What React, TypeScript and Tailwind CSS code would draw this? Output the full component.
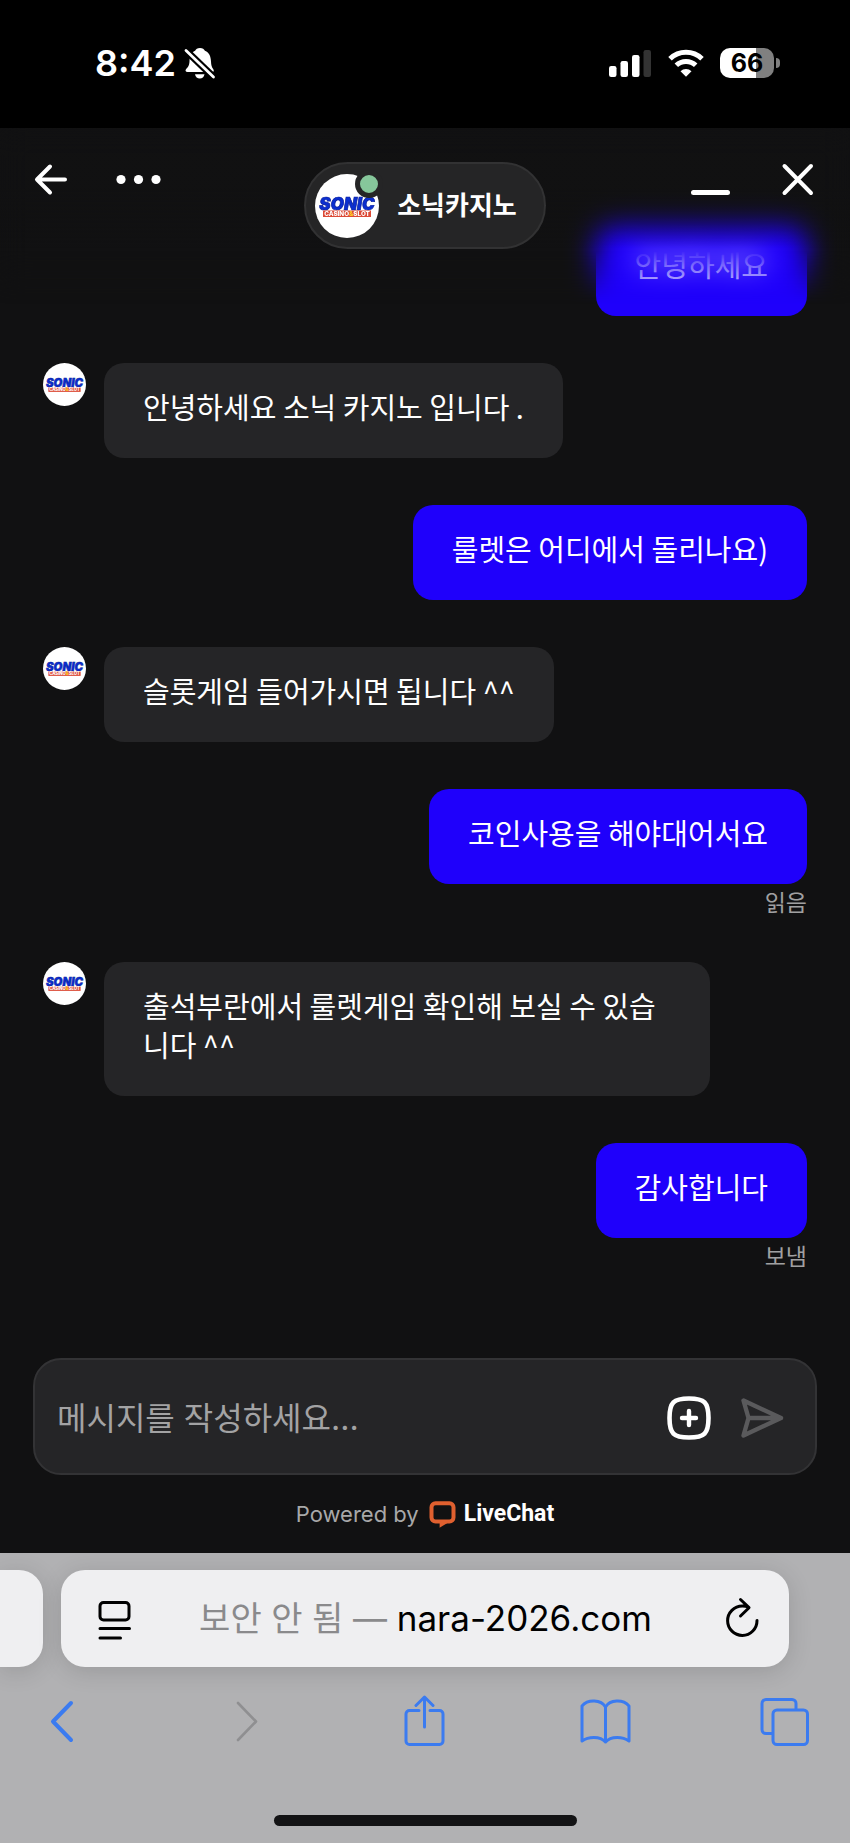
import React from "react";

type Message = {
  from: "agent" | "me";
  text: string;
  status?: string;
};

const MESSAGES: Message[] = [
  { from: "me", text: "안녕하세요" },
  { from: "agent", text: "안녕하세요 소닉 카지노 입니다 ." },
  { from: "me", text: "룰렛은 어디에서 돌리나요)" },
  { from: "agent", text: "슬롯게임 들어가시면 됩니다 ^^" },
  { from: "me", text: "코인사용을 해야대어서요", status: "읽음" },
  { from: "agent", text: "출석부란에서 룰렛게임 확인해 보실 수 있습니다 ^^" },
  { from: "me", text: "감사합니다", status: "보냄" },
];

export default function App() {
  return (
    <div className="flex min-h-screen flex-col bg-[#111112] font-['Inter','Noto_Sans_CJK_KR',sans-serif] text-white">
      <StatusBar />
      <main className="relative flex flex-1 flex-col">
        <ChatHeader />
        <ol className="flex flex-1 flex-col gap-[47px] px-[43px] pt-[93px] font-['Noto_Sans_CJK_KR',sans-serif]">
          {MESSAGES.map((m, i) => (
            <MessageRow key={i} message={m} />
          ))}
        </ol>
        <Composer />
        <PoweredBy />
      </main>
      <BrowserBar />
    </div>
  );
}

function StatusBar() {
  return (
    <div className="flex h-32 items-center justify-between bg-black pt-0 pr-[70px] pb-0.5 pl-[95px]">
      <div className="flex items-center gap-2">
        <span className="text-[36px] leading-10 font-semibold">8:42</span>
        <svg width="32" height="32" viewBox="0 0 32 32" fill="none">
          <path d="M16 1c2.600 0 4.200 1.200 4.900 2.800C25.500 5.600 26.800 10 27 14.500c.1 4 .8 5.500 2.300 7.700.8 1.200.8 2.800-1 2.800H3.500C1.500 25 1 23.400 2 22.200c2.400-2.500 3.300-4 3.500-8 .2-4.500 1.500-8.500 5.600-10.400C11.800 2.200 13.400 1 16 1Z" fill="white" />
          <path d="M11 27.200h9.500c-.4 2.700-2.300 4.300-4.700 4.300s-4.400-1.600-4.800-4.300Z" fill="white" />
          <path d="M2 3.500 30 30.500" stroke="black" strokeWidth="7" />
          <path d="M2 3.500 29.500 30" stroke="white" strokeWidth="2.800" strokeLinecap="round" />
        </svg>
      </div>
      <div className="flex items-center gap-4">
        <svg width="43" height="30" viewBox="0 0 43 30">
          <rect x="0" y="18" width="7.500" height="11" rx="2.200" fill="white" />
          <rect x="11.500" y="13" width="7.500" height="16" rx="2.200" fill="white" />
          <rect x="23" y="7" width="7.500" height="22" rx="2.200" fill="white" />
          <rect x="34.500" y="2" width="7.500" height="27" rx="2.200" fill="#333333" />
        </svg>
        <svg width="36" height="30" viewBox="0 0 36 30" fill="none" stroke="white" strokeWidth="5">
          <path d="M2 10.800a23 23 0 0 1 32 0" />
          <path d="M8.300 17.300a14 14 0 0 1 19.400 0" />
          <path d="M12.500 23.200a8 8 0 0 1 11 0L18 28.800Z" fill="white" stroke="none" />
        </svg>
        <div className="flex items-center gap-0.5">
          <div className="flex h-[30px] w-[54px] items-center justify-center rounded-[10px] bg-linear-to-r from-white from-67% to-[#808080] to-67%">
            <span className="text-[25px] leading-7 font-bold text-black">66</span>
          </div>
          <div className="h-2.5 w-1 rounded-r-full bg-[#808080]" />
        </div>
      </div>
    </div>
  );
}

function ChatHeader() {
  return (
    <header className="absolute inset-x-0 top-0 z-10">
      <div className="pointer-events-none absolute inset-x-0 top-0 h-[176px] mask-b-from-70% backdrop-blur-[14px]" />
      <div className="pointer-events-none absolute inset-x-0 top-0 h-[120px] bg-linear-to-b from-[#111112] from-50% to-transparent opacity-70" />
      <div className="relative grid grid-cols-[1fr_auto_1fr] items-start px-[34px] pt-[34px]">
        <div className="flex items-center gap-12">
          <button type="button" aria-label="뒤로">
            <svg width="34" height="34" viewBox="0 0 34 34" fill="none" stroke="white" strokeWidth="4" strokeLinecap="round" strokeLinejoin="round">
              <path d="M31 17.500H3.500M16 4.500l-13 13 13 13" />
            </svg>
          </button>
          <button type="button" aria-label="메뉴">
            <svg width="45" height="34" viewBox="0 0 45 34" fill="white">
              <circle cx="5" cy="17.500" r="4.600" />
              <circle cx="22.500" cy="17.500" r="4.600" />
              <circle cx="40" cy="17.500" r="4.600" />
            </svg>
          </button>
        </div>
        <div className="flex h-[87px] items-center gap-[18px] rounded-full border-2 border-[#323233] bg-[#252526] pr-[27px] pl-[9px]">
          <div className="relative">
            <Logo size={64} />
            <span className="absolute -top-1 -right-1 size-[28px] rounded-full border-[5px] border-[#252526] bg-[#86c79b]" />
          </div>
          <h1 className="text-[26px] leading-9 font-bold">소닉카지노</h1>
        </div>
        <div className="flex items-center justify-end gap-[50px]">
          <button type="button" aria-label="최소화">
            <svg width="40" height="34" viewBox="0 0 40 34">
              <rect x="1" y="28" width="39" height="5" rx="2.500" fill="white" />
            </svg>
          </button>
          <button type="button" aria-label="닫기">
            <svg width="36" height="34" viewBox="0 0 36 34" fill="none" stroke="white" strokeWidth="4" strokeLinecap="round">
              <path d="m4.500 4 26.500 27M31 4 4.500 31" />
            </svg>
          </button>
        </div>
      </div>
    </header>
  );
}

function Logo({ size }: { size: number }) {
  return (
    <svg width={size} height={size} viewBox="0 0 64 64" className="shrink-0">
      <circle cx="32" cy="32" r="32" fill="white" />
      <text x="32" y="35.500" textAnchor="middle" fontFamily="Inter" fontSize="17" fontWeight="900" fontStyle="italic" fill="#0b2fd0" stroke="#0a1e9a" strokeWidth="0.700">
        SONIC
      </text>
      <rect x="8" y="36.500" width="48" height="6.500" fill="#dc4a36" />
      <text x="32" y="42" textAnchor="middle" fontFamily="Inter" fontSize="6.300" fontWeight="800" fill="white">
        CASINO<tspan fill="#ffc928">&amp;</tspan>SLOT
      </text>
    </svg>
  );
}

function MessageRow({ message }: { message: Message }) {
  if (message.from === "agent") {
    return (
      <li className="flex items-start gap-[18px] pr-[97px]">
        <Logo size={43} />
        <p className="rounded-[20px] bg-[#252527] px-[39px] pt-6 pb-8 text-[29px] leading-[39px]">{message.text}</p>
      </li>
    );
  }
  return (
    <li className="flex flex-col items-end">
      <p className="rounded-[20px] bg-[#1f00fb] px-[39px] pt-6 pb-8 text-[29px] leading-[39px]">{message.text}</p>
      {message.status && <span className="pt-1 text-[23px] leading-[27px] text-[#a0a0a1]">{message.status}</span>}
    </li>
  );
}

function Composer() {
  return (
    <form className="mx-[33px] flex h-[117px] items-center gap-[26px] rounded-[28px] border-2 border-[#333335] bg-[#252527] pt-[3px] pr-[31px] pl-[22px]">
      <input
        type="text"
        aria-label="메시지"
        placeholder="메시지를 작성하세요..."
        className="h-14 min-w-0 flex-1 bg-transparent text-[32px] outline-none placeholder:text-[#a3a3a4]"
      />
      <button type="button" aria-label="첨부">
        <svg width="46" height="46" viewBox="0 0 46 46" fill="none" stroke="white" strokeLinecap="round">
          <path d="M23 3.500c15.500 0 19.500 4 19.500 19.500S38.500 42.500 23 42.500 3.500 38.500 3.500 23 7.500 3.500 23 3.500Z" strokeWidth="4.600" />
          <path d="M23 16v14M16 23h14" strokeWidth="4.400" />
        </svg>
      </button>
      <button type="submit" aria-label="보내기">
        <svg width="46" height="46" viewBox="0 0 46 46" fill="none" stroke="#5a5a5c" strokeWidth="4.400" strokeLinecap="round" strokeLinejoin="round">
          <path d="M5.500 5.500 43 23 5.500 40.500 10.500 23Z M10.500 23H43" />
        </svg>
      </button>
    </form>
  );
}

function PoweredBy() {
  return (
    <div className="flex h-[78px] items-center justify-center gap-2.5 text-[22px] leading-7">
      <span className="text-[#a8a8a9]">Powered by</span>
      <a href="#livechat" className="flex items-center gap-2">
        <svg width="27" height="27" viewBox="0 0 27 27" fill="none">
          <path d="M6.500 2.300h14a4 4 0 0 1 4 4v10.200a4 4 0 0 1-4 4h-14a4 4 0 0 1-4-4V6.300a4 4 0 0 1 4-4Z" stroke="#e0602f" strokeWidth="4" />
          <path d="M10.600 19v7.800l7.400-4.600V19Z" fill="#e0602f" />
        </svg>
        <span className="font-['Roboto'] text-[23px] font-bold">LiveChat</span>
      </a>
    </div>
  );
}

const TOOLS = [
  { label: "이전 페이지", color: "text-[#3b7bf0]", d: "M33 8 15 26.500 33 45", strokeWidth: 4 },
  { label: "다음 페이지", color: "text-[#8f8f91]", d: "M19 8 37 26.500 19 45", strokeWidth: 2.6 },
  { label: "공유", color: "text-[#3b7bf0]", d: "M20 15.500H10.500a3.500 3.500 0 0 0-3.500 3.500V46a3.500 3.500 0 0 0 3.500 3.500h30A3.500 3.500 0 0 0 44 46V19a3.500 3.500 0 0 0-3.500-3.500H31M25.500 32V2M17 10.500 25.500 2 34 10.500", strokeWidth: 3 },
  { label: "책갈피", color: "text-[#3b7bf0]", d: "M25.500 12C21 4.500 8 4 2 11V46c6-4.500 18-5.500 23.500 1C31 40.500 43 41.500 49 46V11C43 4 30 4.500 25.500 12ZM25.500 12V47", strokeWidth: 3 },
  { label: "탭", color: "text-[#3b7bf0]", d: "M12.500 38.500H6a4 4 0 0 1-4-4V8.500A4 4 0 0 1 6 4.500H32a4 4 0 0 1 4 4V14.500M17 15H43.500a4 4 0 0 1 4 4V45.500a4 4 0 0 1-4 4H17a4 4 0 0 1-4-4V19a4 4 0 0 1 4-4Z", strokeWidth: 3 },
];

function BrowserBar() {
  return (
    <footer className="overflow-hidden bg-[#b1b1b3] pt-[17px] pb-[17px]">
      <div className="flex h-[97px] gap-[18px] pr-[61px]">
        <div className="w-[43px] rounded-r-[24px] bg-[#efeff1] shadow-[0_4px_24px_rgba(0,0,0,0.14)]" />
        <div className="flex flex-1 items-center rounded-[24px] bg-[#efeff1] pr-[25px] pl-8 text-black shadow-[0_4px_24px_rgba(0,0,0,0.14)]">
          <button type="button" aria-label="읽기 도구">
            <svg width="44" height="44" viewBox="0 0 44 44" fill="none" stroke="black" strokeWidth="3" strokeLinecap="round">
              <rect x="7" y="5.500" width="29" height="17.500" rx="3.500" />
              <path d="M7 31.500h29.500M7 41h20.500" />
            </svg>
          </button>
          <p className="flex-1 pr-1.5 text-center text-[35px] leading-[44px] whitespace-nowrap">
            <span className="text-[34px] text-[#8a8a8c]">보안 안 됨 —</span> nara-2026.com
          </p>
          <button type="button" aria-label="새로고침">
            <svg width="44" height="44" viewBox="0 0 44 44" fill="none" stroke="black" strokeWidth="3" strokeLinecap="round" strokeLinejoin="round">
              <path d="M37 23.500A14.700 14.700 0 1 1 22.300 9c2.500 0 4.500.4 6.500 1.300M20.500 2.500 29 10.700 20.500 19" />
            </svg>
          </button>
        </div>
      </div>
      <nav className="mt-7 flex justify-between pr-[39px] pl-[38px]">
        {TOOLS.map((t) => (
          <button key={t.label} type="button" aria-label={t.label} className={t.color}>
            <svg width="51" height="52" viewBox="0 0 51 52" fill="none" stroke="currentColor" strokeWidth={t.strokeWidth} strokeLinecap="round" strokeLinejoin="round">
              <path d={t.d} />
            </svg>
          </button>
        ))}
      </nav>
      <div className="mx-auto mt-[68px] h-[11px] w-[303px] rounded-full bg-[#131315]" />
    </footer>
  );
}
